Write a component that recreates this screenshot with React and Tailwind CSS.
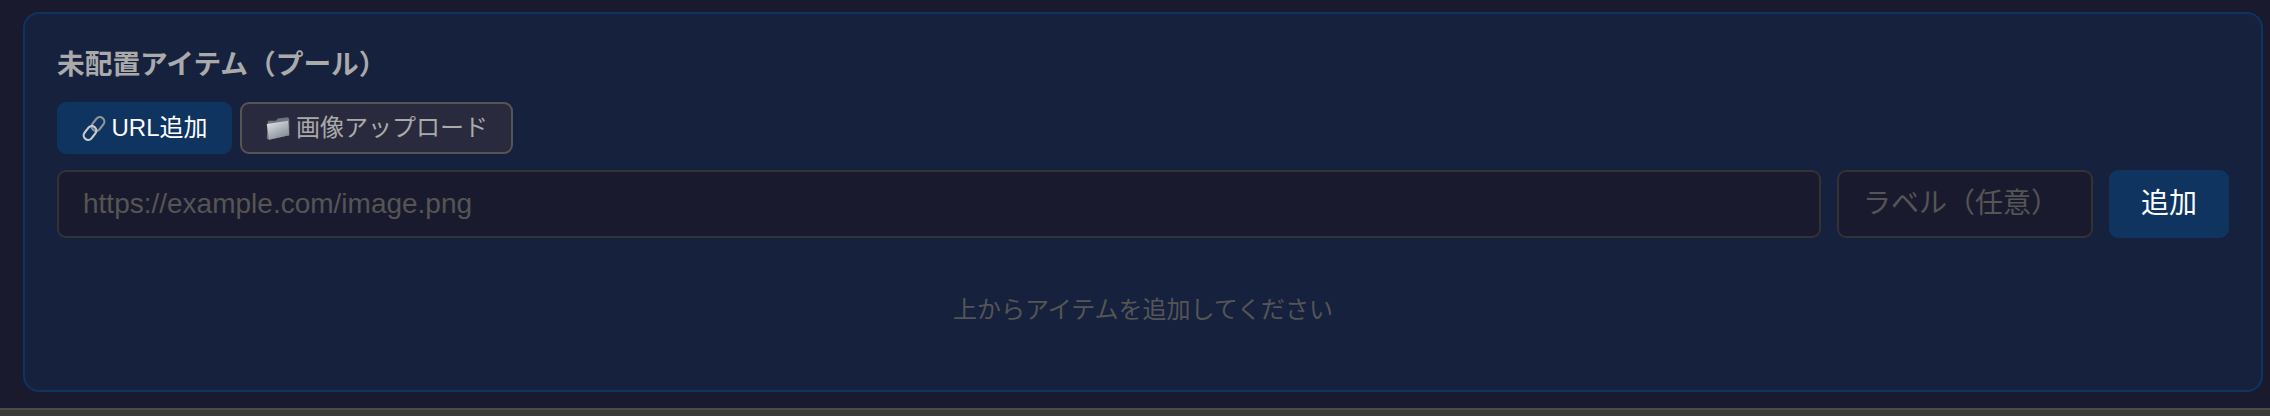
const font = { fontFamily: '"Liberation Sans", "Noto Sans CJK JP", sans-serif' };

function LinkEmoji() {
  return (
    <svg width="26" height="27" viewBox="0 0 26 27" fill="none" className="shrink-0">
      <rect x="12.5" y="1.5" width="9" height="15" rx="4.5" transform="rotate(38 17 9)" stroke="#8f9499" strokeWidth="2.2" />
      <rect x="4.5" y="10.5" width="9" height="15" rx="4.5" transform="rotate(38 9 18)" stroke="#c8cbce" strokeWidth="2.2" />
    </svg>
  );
}

function FolderEmoji() {
  return (
    <svg width="26" height="27" viewBox="0 0 22 24" className="shrink-0">
      <defs>
        <linearGradient id="fold" x1="0" y1="0" x2="0.6" y2="1">
          <stop offset="0" stopColor="#e6eaed" />
          <stop offset="1" stopColor="#858c94" />
        </linearGradient>
      </defs>
      <path d="M2 5 L9 5 L11 3 L20 2 L21 4 L21 18 L3 22 L1 21 Z" fill="#6f767d" />
      <path d="M1 8 L20 5 L21 18 L3 22 Z" fill="url(#fold)" />
    </svg>
  );
}

export default function App() {
  return (
    <div style={font} className="h-[416px] w-full overflow-hidden bg-[#1a1a2e] flex flex-col">
      <div className="flex-1 pt-[12px] pl-[23px] pr-[7px]">
        <section className="h-[380px] rounded-[16px] border-2 border-[#0f3460] bg-[#16213e] pt-[32px] pl-[32px] pr-[32px]">
          <h3 className="text-[27.7px] leading-[38px] font-bold text-[#aaaaaa]">未配置アイテム（プール）</h3>
          <div className="mt-[18px] flex gap-[8px]">
            <button className="h-[52px] w-[175px] rounded-[9px] bg-[#0f3460] text-white text-[24px] flex items-center justify-center gap-[4px]">
              <LinkEmoji />
              <span>URL追加</span>
            </button>
            <button className="h-[52px] w-[273px] rounded-[9px] border-2 border-[#555555] bg-[#2a2a3e] text-[#aaaaaa] text-[24px] flex items-center justify-center gap-[5px]">
              <FolderEmoji />
              <span>画像アップロード</span>
            </button>
          </div>
          <div className="mt-[16px] flex gap-[16px]">
            <input
              readOnly
              placeholder="https://example.com/image.png"
              className="h-[68px] min-w-0 flex-1 rounded-[9px] border-2 border-[#333333] bg-[#1a1a2e] pl-[24px] pr-[23px] text-[28px] outline-none placeholder:text-[#555555]"
            />
            <input
              readOnly
              placeholder="ラベル（任意）"
              className="h-[68px] w-[256px] rounded-[9px] border-2 border-[#333333] bg-[#1a1a2e] px-[24px] text-[28px] outline-none placeholder:text-[#555555]"
            />
            <button className="h-[68px] w-[120px] rounded-[9px] bg-[#0f3460] text-white text-[28px]">追加</button>
          </div>
          <p className="mt-[55px] text-center text-[24px] leading-[34px] text-[#555555]">上からアイテムを追加してください</p>
        </section>
      </div>
      <div className="h-[8px] bg-[#3a3a3a] border-t-2 border-[#4a4a4a]" />
    </div>
  );
}
